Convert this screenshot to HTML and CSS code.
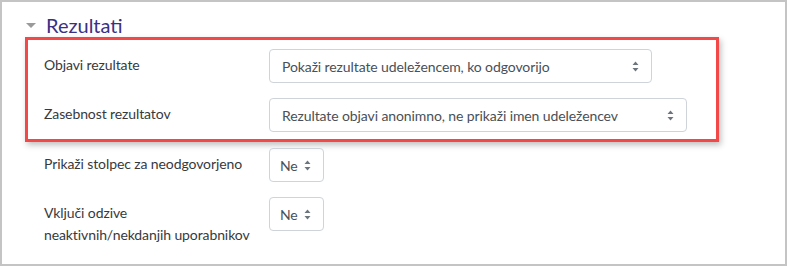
FILE: index.html
```html
<!DOCTYPE html>
<html lang="sl">
<head>
  <meta charset="UTF-8">
  <title>Rezultati</title>
  <link rel="stylesheet" href="styles.css">
</head>
<body>
  <div class="frame">
    <div class="legend"><span class="caret"></span>Rezultati</div>

    <div class="highlight">
      <div class="row">
        <div class="label">Objavi rezultate</div>
        <div class="select wide">
          <span>Pokaži rezultate udeležencem, ko odgovorijo</span>
          <svg class="arrows" width="7" height="11" viewBox="0 0 7 11"><path d="M3.5 0.5 L6.5 4 L0.5 4 Z M3.5 10.5 L6.5 7 L0.5 7 Z" fill="#6c757d"/></svg>
        </div>
      </div>
      <div class="row last">
        <div class="label">Zasebnost rezultatov</div>
        <div class="select wider">
          <span>Rezultate objavi anonimno, ne prikaži imen udeležencev</span>
          <svg class="arrows" width="7" height="11" viewBox="0 0 7 11"><path d="M3.5 0.5 L6.5 4 L0.5 4 Z M3.5 10.5 L6.5 7 L0.5 7 Z" fill="#6c757d"/></svg>
        </div>
      </div>
    </div>

    <div class="row plain">
      <div class="label">Prikaži stolpec za neodgovorjeno</div>
      <div class="select small">
        <span>Ne</span>
        <svg class="arrows" width="7" height="11" viewBox="0 0 7 11"><path d="M3.5 0.5 L6.5 4 L0.5 4 Z M3.5 10.5 L6.5 7 L0.5 7 Z" fill="#6c757d"/></svg>
      </div>
    </div>
    <div class="row plain">
      <div class="label">Vključi odzive<br>neaktivnih/nekdanjih uporabnikov</div>
      <div class="select small">
        <span>Ne</span>
        <svg class="arrows" width="7" height="11" viewBox="0 0 7 11"><path d="M3.5 0.5 L6.5 4 L0.5 4 Z M3.5 10.5 L6.5 7 L0.5 7 Z" fill="#6c757d"/></svg>
      </div>
    </div>
  </div>
</body>
</html>
```

FILE: styles.css
```css
body {
  margin: 0;
  font-family: 'Lato', 'Open Sans', sans-serif;
  background: #fff;
  color: #373a3c;
}

.frame {
  width: 787px;
  height: 266px;
  box-sizing: border-box;
  border: 2px solid #c4c4c4;
  padding: 11px 0 0 23px;
  overflow: hidden;
}

.legend {
  display: flex;
  align-items: center;
  font-size: 20px;
  line-height: 25px;
  color: #3a3183;
}

.caret {
  width: 0;
  height: 0;
  border-left: 5px solid transparent;
  border-right: 5px solid transparent;
  border-top: 5px solid #9a9a9a;
  margin: 0 10px 0 1px;
}

.highlight {
  width: 694px;
  box-sizing: border-box;
  margin-top: -1px;
  margin-bottom: 6px;
  border: 3px solid #f24848;
  padding: 9px 0 7px 16px;
  box-shadow: 2px 3px 6px rgba(0, 0, 0, 0.25);
}

.row {
  display: flex;
  align-items: flex-start;
  margin-bottom: 15px;
}

.row.last {
  margin-bottom: 0;
}

.row.plain {
  margin-left: 19px;
}

.label {
  width: 225px;
  flex-shrink: 0;
  font-size: 14px;
  letter-spacing: -0.1px;
  line-height: 22px;
  padding-top: 5px;
}

.select {
  display: flex;
  align-items: center;
  justify-content: space-between;
  height: 34px;
  box-sizing: border-box;
  border: 1px solid #ced4da;
  border-radius: 4px;
  padding: 0 12px;
  font-size: 14px;
  letter-spacing: -0.1px;
  color: #495057;
}

.select.wide {
  width: 383px;
}

.select.wider {
  width: 418px;
}

.select.small {
  width: 55px;
  padding: 0 12px 0 10px;
}
```
